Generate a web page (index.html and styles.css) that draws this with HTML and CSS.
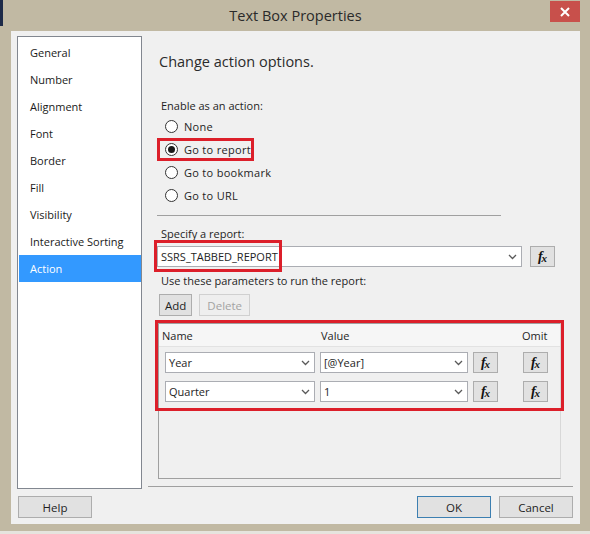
FILE: index.html
```html
<!DOCTYPE html>
<html lang="en">
<head>
<meta charset="utf-8">
<title>Text Box Properties</title>
<link rel="stylesheet" href="styles.css">
</head>
<body>
<div class="window">
  <div class="titlebar">
    <div class="title">Text Box Properties</div>
    <button class="close" aria-label="Close">
      <svg width="10" height="10" viewBox="0 0 10 10"><path d="M1 1 L9 9 M9 1 L1 9" stroke="#fff" stroke-width="2" fill="none"/></svg>
    </button>
  </div>
  <div class="client">
    <div class="main">
      <ul class="pages">
        <li>General</li>
        <li>Number</li>
        <li>Alignment</li>
        <li>Font</li>
        <li>Border</li>
        <li>Fill</li>
        <li>Visibility</li>
        <li>Interactive Sorting</li>
        <li class="selected">Action</li>
      </ul>
      <div class="panel">
        <h1 class="heading">Change action options.</h1>
        <div class="label enable">Enable as an action:</div>
        <div class="radios">
          <label class="radio"><span class="dot"></span>None</label>
          <label class="radio checked"><span class="dot"></span>Go to report</label>
          <label class="radio"><span class="dot"></span>Go to bookmark</label>
          <label class="radio"><span class="dot"></span>Go to URL</label>
        </div>
        <div class="rule"></div>
        <div class="label specify">Specify a report:</div>
        <div class="report-row">
          <div class="combo wide"><span>SSRS_TABBED_REPORT</span>
            <svg class="chev" width="9" height="6" viewBox="0 0 9 6"><path d="M1 1 L4.5 4.5 L8 1" fill="none" stroke="#5a5a5a" stroke-width="1.3"/></svg>
          </div>
          <button class="fxbtn"><span class="fx">f<span>x</span></span></button>
        </div>
        <div class="label params">Use these parameters to run the report:</div>
        <div class="tool-row">
          <button class="btn small">Add</button>
          <button class="btn small disabled">Delete</button>
        </div>
        <div class="grid">
          <div class="grid-head">
            <span>Name</span><span>Value</span><span>Omit</span>
          </div>
          <div class="grid-row">
            <div class="combo"><span>Year</span><svg class="chev" width="9" height="6" viewBox="0 0 9 6"><path d="M1 1 L4.5 4.5 L8 1" fill="none" stroke="#5a5a5a" stroke-width="1.3"/></svg></div>
            <div class="combo"><span>[@Year]</span><svg class="chev" width="9" height="6" viewBox="0 0 9 6"><path d="M1 1 L4.5 4.5 L8 1" fill="none" stroke="#5a5a5a" stroke-width="1.3"/></svg></div>
            <button class="fxbtn"><span class="fx">f<span>x</span></span></button>
            <button class="fxbtn"><span class="fx">f<span>x</span></span></button>
          </div>
          <div class="grid-row">
            <div class="combo"><span>Quarter</span><svg class="chev" width="9" height="6" viewBox="0 0 9 6"><path d="M1 1 L4.5 4.5 L8 1" fill="none" stroke="#5a5a5a" stroke-width="1.3"/></svg></div>
            <div class="combo"><span>1</span><svg class="chev" width="9" height="6" viewBox="0 0 9 6"><path d="M1 1 L4.5 4.5 L8 1" fill="none" stroke="#5a5a5a" stroke-width="1.3"/></svg></div>
            <button class="fxbtn"><span class="fx">f<span>x</span></span></button>
            <button class="fxbtn"><span class="fx">f<span>x</span></span></button>
          </div>
        </div>
        <!-- highlight marks drawn over the form -->
        <div class="mark mark-radio"></div>
        <div class="mark mark-report"></div>
        <div class="mark mark-grid"></div>
      </div>
    </div>
    <div class="buttons">
      <button class="btn">Help</button>
      <span class="spacer"></span>
      <button class="btn default">OK</button>
      <button class="btn">Cancel</button>
    </div>
  </div>
</div>
</body>
</html>
```

FILE: styles.css
```css
* { box-sizing: border-box; }

html, body { margin: 0; padding: 0; }

body {
  width: 590px;
  height: 534px;
  overflow: hidden;
  background: #e6e4de;
  font-family: "Open Sans", "Noto Sans", sans-serif;
  color: #1e1e1e;
}

button { font-family: inherit; }

/* window frame */
.window {
  position: relative;
  background: #c1b9a3;
  padding: 0 10px 7px 11px;
}

.window::before {
  content: "";
  position: absolute;
  left: 0;
  top: 0;
  width: 3px;
  height: 26px;
  background: #1d2a48;
}

.titlebar {
  height: 31px;
  display: grid;
  grid-template-columns: 1fr auto 1fr;
  align-items: start;
}

.title {
  grid-column: 2;
  font-size: 14.5px;
  line-height: 20px;
  padding-top: 6px;
  color: #2a2a2a;
}

.close {
  grid-column: 3;
  justify-self: end;
  margin-top: 1px;
  width: 30px;
  height: 21px;
  padding: 0;
  border: none;
  background: #c8504b;
  display: flex;
  align-items: center;
  justify-content: center;
}

/* dialog body */
.client {
  background: #f0f0f0;
  height: 493px;
  padding: 5px 7px 0 6px;
}

.main {
  display: flex;
  height: 453px;
}

.pages {
  list-style: none;
  margin: 0;
  width: 125px;
  flex: none;
  border: 1px solid #828790;
  background: #fff;
  padding: 2px 0 0 1px;
}

.pages li {
  height: 27px;
  line-height: 27px;
  padding-left: 11px;
  font-size: 11px;
  color: #1a1a1a;
}

.pages li.selected {
  background: #3399ff;
  color: #fff;
}

.panel {
  position: relative;
  flex: 1;
  margin-left: 6px;
  margin-bottom: 2px;
  border-bottom: 1px solid #a0a0a0;
  display: flex;
  flex-direction: column;
}

.heading {
  margin: 16px 0 0 11px;
  font-size: 14.5px;
  font-weight: normal;
  line-height: 20px;
  color: #2b2b2b;
}

.label {
  font-size: 11px;
  line-height: 16px;
  padding-left: 13px;
  color: #1e1e1e;
}

.enable { margin-top: 26px; }

.radios {
  margin-top: 1px;
  padding-left: 17px;
  display: flex;
  flex-direction: column;
}

.radio {
  height: 23px;
  display: flex;
  align-items: center;
  gap: 6px;
  font-size: 11px;
  letter-spacing: 0.3px;
}

.dot {
  width: 13px;
  height: 13px;
  border-radius: 50%;
  border: 1px solid #333;
  background: #fff;
  display: flex;
  align-items: center;
  justify-content: center;
}

.radio.checked .dot::after {
  content: "";
  width: 7px;
  height: 7px;
  border-radius: 50%;
  background: #1a1a1a;
}

.rule {
  margin: 8px 0 0 9px;
  width: 344px;
  height: 1px;
  background: #a0a0a0;
}

.specify { margin-top: 10px; }

.report-row {
  margin: 4px 0 0 9px;
  display: flex;
  gap: 8px;
}

.combo {
  height: 21px;
  background: #fff;
  border: 1px solid #abadb3;
  display: flex;
  align-items: center;
  justify-content: space-between;
  padding: 0 4px 0 3px;
  font-size: 11px;
}

.combo.wide { width: 365px; }

.fxbtn {
  width: 25px;
  height: 21px;
  padding: 0;
  border: 1px solid #adadad;
  background: #e1e1e1;
  display: flex;
  align-items: center;
  justify-content: center;
}

.fx {
  font-family: "Liberation Serif", "DejaVu Serif", serif;
  font-weight: bold;
  font-style: italic;
  font-size: 14px;
  line-height: 14px;
  color: #111;
}

.fx span {
  font-size: 11px;
  position: relative;
  top: 1px;
  margin-left: -1px;
}

.params { margin-top: 6px; }

.tool-row {
  margin: 5px 0 0 11px;
  display: flex;
  gap: 7px;
}

.btn {
  height: 22px;
  padding: 0 6px;
  border: 1px solid #adadad;
  background: #e1e1e1;
  font-size: 11.5px;
  color: #1e1e1e;
}

.btn.small { height: 22px; padding: 0 5px; }

.btn.disabled {
  border-color: #d0d0d0;
  background: #eeeeee;
  color: #a3a3a3;
  padding: 0 7px;
}

/* parameter grid */
.grid {
  margin: 7px 0 0 10px;
  width: 403px;
  height: 156px;
  border: 1px solid #a0a0a0;
  border-right-color: #d8d8d8;
}

.grid-head {
  height: 23px;
  display: grid;
  grid-template-columns: 159px 201px auto;
  align-items: center;
  padding-left: 3px;
  font-size: 11px;
  background: #f6f6f6;
  border-bottom: 1px solid #e2e2e2;
}

.grid-row {
  display: grid;
  grid-template-columns: 150px 148px 25px 25px;
  column-gap: 5px;
  padding-left: 6px;
  margin-top: 5px;
}

.grid-row + .grid-row { margin-top: 8px; }

.grid-row .fxbtn:last-child { margin-left: 20px; }

/* red highlight marks */
.mark {
  position: absolute;
  border: 3px solid #dc1f2a;
}

.mark-radio { left: 9px; top: 102px; width: 97px; height: 23px; }
.mark-report { left: 6px; top: 204px; width: 128px; height: 32px; }
.mark-grid { left: 7px; top: 284px; width: 409px; height: 91px; }

/* dialog buttons */
.buttons {
  margin-top: 7px;
  display: flex;
  gap: 8px;
  padding-left: 1px;
}

.buttons .btn { width: 74px; height: 22px; }

.spacer { flex: 1; }

.btn.default { border-color: #3c7fb1; }
```
